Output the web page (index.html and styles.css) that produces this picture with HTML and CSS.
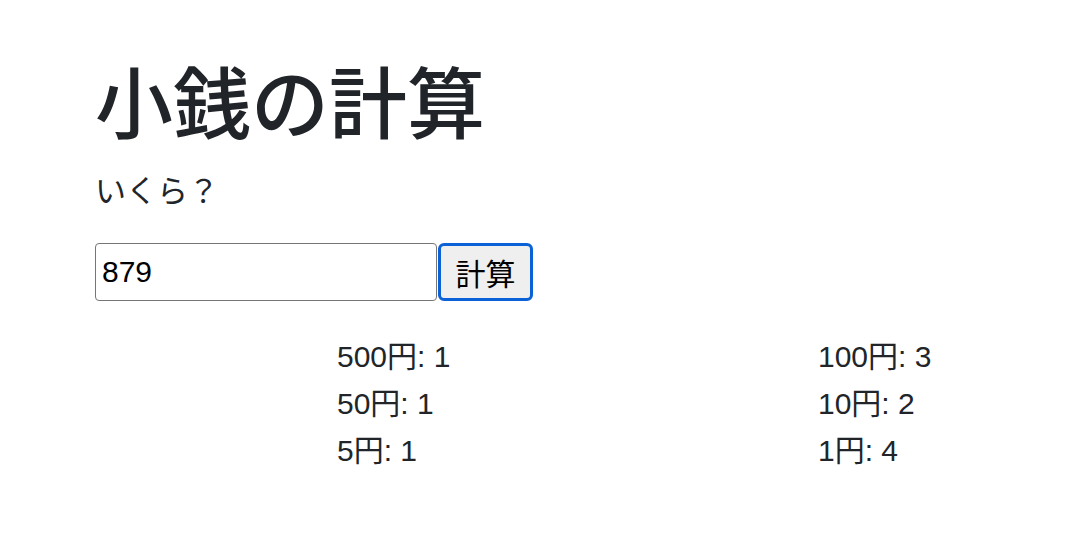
FILE: index.html
```html
<!DOCTYPE html>
<html lang="ja">
<head>
    <meta charset="UTF-8">
    <title>小銭の計算</title>
    <link rel="stylesheet" href="styles.css">
</head>
<body>

<div class="container">
    <h1>小銭の計算</h1>
    <p class="question">いくら？</p>

    <form class="calc-form">
        <input type="text" class="amount" value="879">
        <button type="button" class="calc-button">計算</button>
    </form>

    <div class="results">
        <div class="coin">500円: 1</div>
        <div class="coin">100円: 3</div>
        <div class="coin">50円: 1</div>
        <div class="coin">10円: 2</div>
        <div class="coin">5円: 1</div>
        <div class="coin">1円: 4</div>
    </div>
</div>

</body>
</html>
```

FILE: styles.css
```css
body {
    font-family: 'Liberation Sans', 'Noto Sans CJK JP', sans-serif;
    background-color: #FFFFFF;
    color: #212529;
    margin: 0;
    padding: 0;
}

.container {
    padding: 53px 95px 0 95px;
}

h1 {
    margin: 0 0 19px 0;
    font-family: 'Noto Sans CJK JP', sans-serif;
    font-size: 78px;
    font-weight: 500;
    line-height: 1.2;
}

.question {
    margin: 0 0 31px 0;
    font-family: 'Noto Sans CJK JP', sans-serif;
    font-size: 31px;
    line-height: 46.5px;
}

.calc-form {
    display: flex;
    align-items: stretch;
    gap: 1px;
    height: 58px;
}

.amount {
    width: 342px;
    box-sizing: border-box;
    padding: 0 6px;
    font-family: 'Liberation Sans', sans-serif;
    font-size: 30px;
    color: #000000;
    border: 1px solid #767676;
    border-radius: 4px;
    background-color: #FFFFFF;
}

.calc-button {
    width: 95px;
    box-sizing: border-box;
    font-family: 'Noto Sans CJK JP', sans-serif;
    font-size: 30px;
    color: #000000;
    background-color: #EFEFEF;
    border: 3px solid #0B61D6;
    border-radius: 6px;
    padding: 0;
}

.results {
    display: grid;
    grid-template-columns: 481px 200px;
    margin: 32px 0 0 242px;
    font-size: 30px;
    line-height: 47px;
}
```
